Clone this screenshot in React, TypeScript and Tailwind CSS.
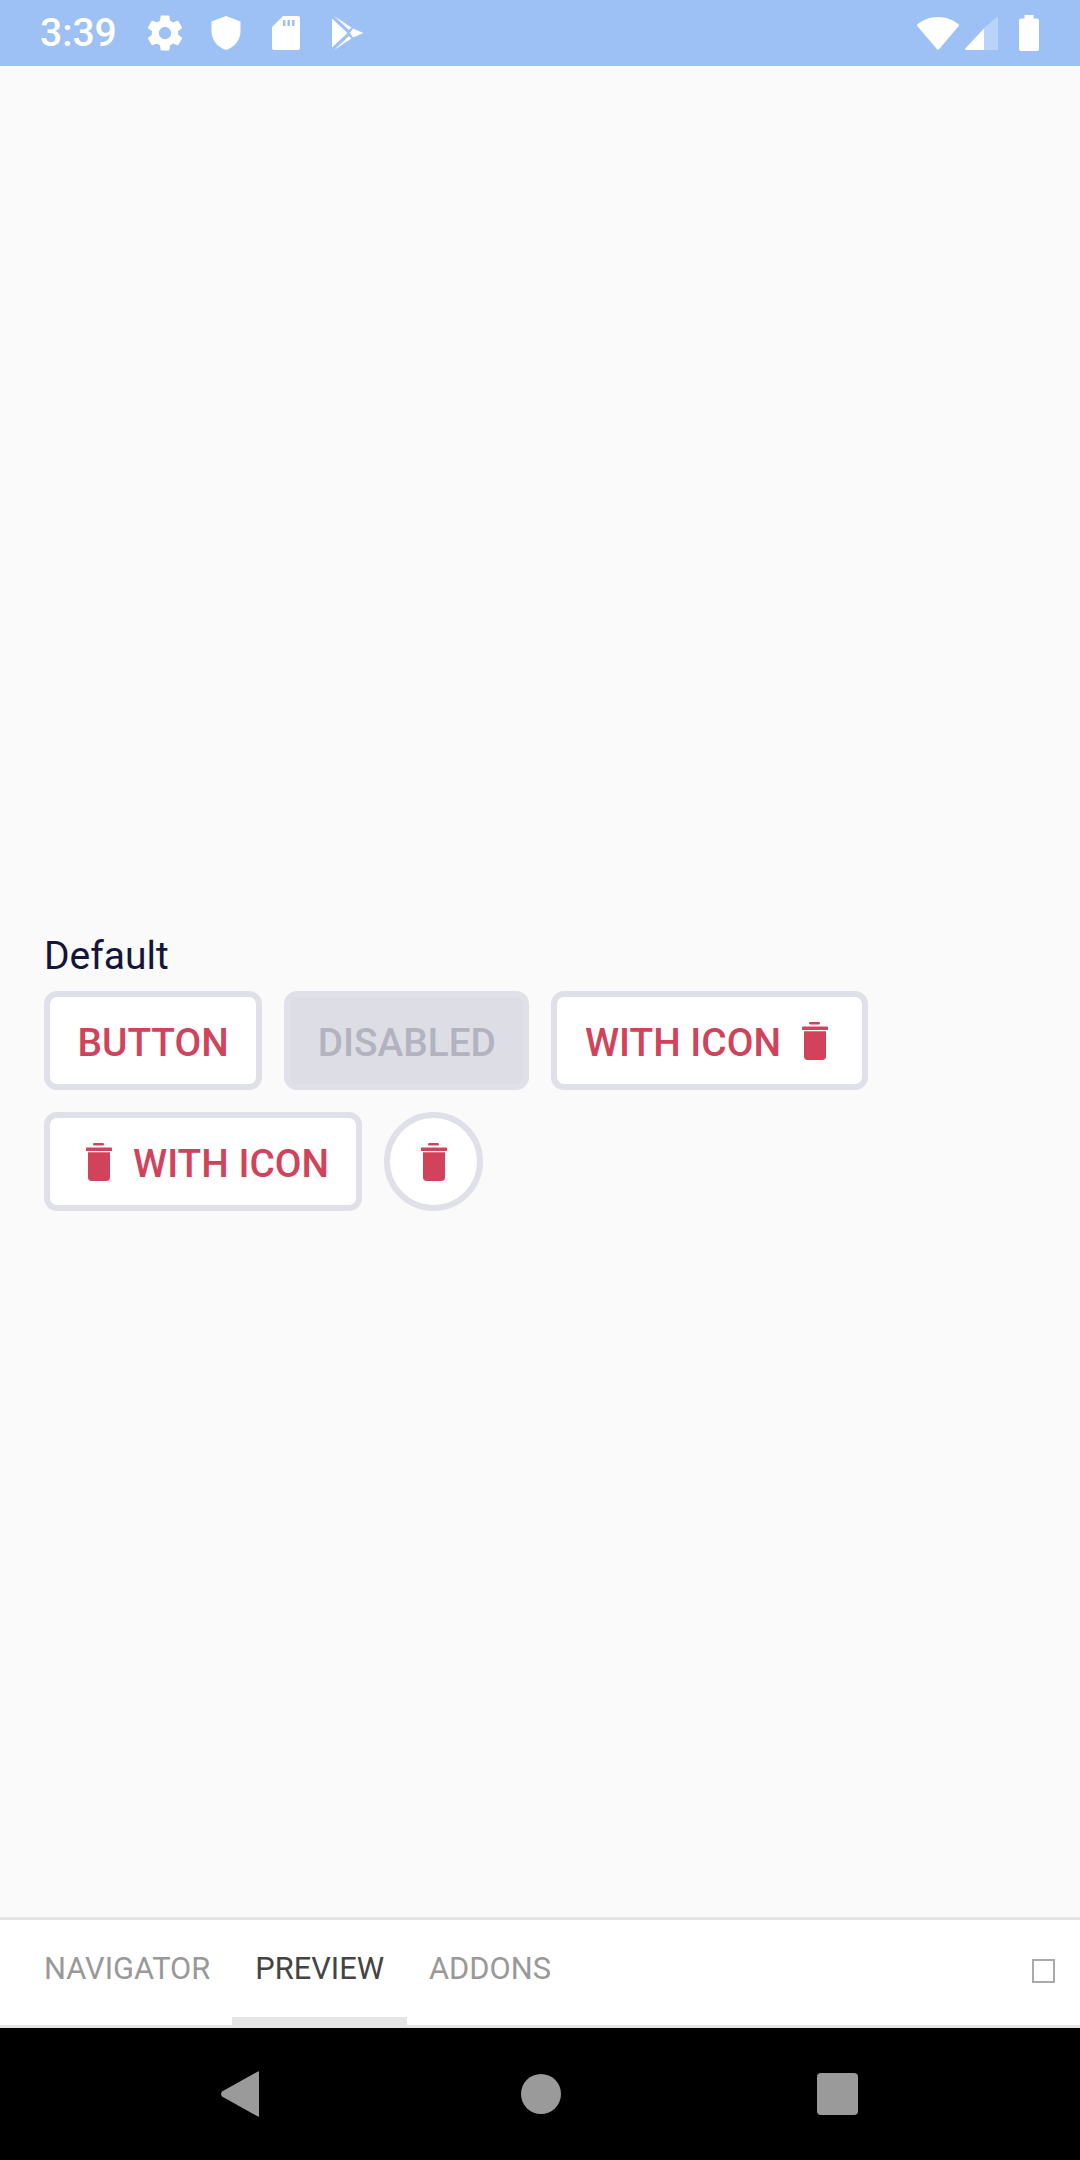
import React from 'react';

function Trash({ className }: { className?: string }) {
  return (
    <svg viewBox="0 0 26 38" className={className} fill="#d1435b">
      <rect x="7" y="0" width="11" height="2.6" rx="1.3" />
      <path d="M1 4.6h24a1 1 0 0 1 1 1V8H0V5.6a1 1 0 0 1 1-1z" />
      <path d="M2 9.2h22v25a3.8 3.8 0 0 1-3.8 3.8H5.8A3.8 3.8 0 0 1 2 34.2z" />
    </svg>
  );
}

function OutlineButton({ children }: { children: React.ReactNode }) {
  return (
    <button className="h-[99px] flex items-center px-[27.5px] pt-[5px] bg-white border-[6px] border-[#dfe0e8] rounded-[13px] text-[38.8px] font-medium text-[#d1435b]">
      {children}
    </button>
  );
}

function StatusBar() {
  return (
    <div className="h-[66px] bg-[#9dc1f5] flex items-center pl-[40px] pr-[41px] text-white shrink-0">
      <span className="text-[39px] font-medium leading-none w-[104px]">3:39</span>
      {/* settings */}
      <svg viewBox="0 0 24 24" className="w-[42px] h-[42px]" fill="#fff">
        <path d="M19.43 12.98c.04-.32.07-.64.07-.98s-.03-.66-.07-.98l2.11-1.65c.19-.15.24-.42.12-.64l-2-3.46c-.12-.22-.39-.3-.61-.22l-2.49 1c-.52-.4-1.08-.73-1.69-.98l-.38-2.65A.488.488 0 0 0 14 2h-4c-.25 0-.46.18-.49.42l-.38 2.65c-.61.25-1.17.59-1.69.98l-2.49-1c-.23-.09-.49 0-.61.22l-2 3.46c-.13.22-.07.49.12.64l2.11 1.65c-.04.32-.07.65-.07.98s.03.66.07.98l-2.11 1.65c-.19.15-.24.42-.12.64l2 3.46c.12.22.39.3.61.22l2.49-1c.52.4 1.08.73 1.69.98l.38 2.65c.03.24.24.42.49.42h4c.25 0 .46-.18.49-.42l.38-2.65c.61-.25 1.17-.59 1.69-.98l2.49 1c.23.09.49 0 .61-.22l2-3.46c.12-.22.07-.49-.12-.64l-2.11-1.65zM12 15.5c-1.93 0-3.5-1.57-3.5-3.5s1.57-3.5 3.5-3.5 3.5 1.57 3.5 3.5-1.57 3.5-3.5 3.5z" />
      </svg>
      {/* shield */}
      <svg viewBox="0 0 30 34" className="w-[30px] h-[34px] ml-[25px]" fill="#fff">
        <path d="M15 0 29.5 5.5V15c0 9-5.8 16.2-14.5 19C6.300 31.200.5 24 .5 15V5.500z" />
      </svg>
      {/* sd card */}
      <svg viewBox="0 0 28 34" className="w-[28px] h-[34px] ml-[31px]" fill="#fff" fillRule="evenodd">
        <path d="M11 0h15a2 2 0 0 1 2 2v30a2 2 0 0 1-2 2H2a2 2 0 0 1-2-2V11zM11 4v6h2.500V4zM15.500 4v6H18V4zM20 4v6h2.500V4z" />
      </svg>
      {/* play store */}
      <svg viewBox="0 0 32 34" className="w-[32px] h-[34px] ml-[32px]" fill="#fff">
        <path d="M0 2.500 15.500 17 0 31.500z" />
        <path d="M2 0 19.500 11.500 17 14z" />
        <path d="M2 34 19.500 22.500 17 20z" />
        <path d="M21 12.500 31.500 17 21 21.500 18 17z" />
      </svg>
      <div className="flex-1" />
      {/* wifi */}
      <svg viewBox="0 0 42 33" className="w-[42px] h-[33px]" fill="#fff">
        <path d="M21 0c8 0 15 2.800 20.500 7.300.6.500.7 1.300.2 1.800L22 32.300c-.5.600-1.500.600-2 0L.3 9.100c-.5-.5-.4-1.300.2-1.800C6 2.800 13 0 21 0z" />
      </svg>
      {/* signal */}
      <svg viewBox="0 0 33 33" className="w-[33px] h-[33px] ml-[6px]">
        <path d="M19 11 32 0c.6-.4 1 0 1 .6V33H19z" fill="#fff" fillOpacity="0.3" />
        <path d="M19 11.500V33H1c-.9 0-1.300-1-.7-1.600z" fill="#fff" />
      </svg>
      {/* battery */}
      <svg viewBox="0 0 20 36" className="w-[20px] h-[36px] ml-[21px]" fill="#fff">
        <path d="M5.500 0h9v3.500H18a2 2 0 0 1 2 2V34a2 2 0 0 1-2 2H2a2 2 0 0 1-2-2V5.500a2 2 0 0 1 2-2h3.500z" />
      </svg>
    </div>
  );
}

function TabBar() {
  return (
    <div className="h-[111px] bg-white border-t-[3px] border-b-[3px] border-[#e5e5e5] flex pl-[22px] pr-[25px] text-[30.8px] text-[#999999] shrink-0">
      <div className="h-full px-[22px] pt-[2px] flex items-center border-b-[8px] border-transparent">NAVIGATOR</div>
      <div className="h-full px-[23px] pt-[2px] flex items-center border-b-[8px] border-[#e5e5e5] text-[#444444]">PREVIEW</div>
      <div className="h-full px-[22px] pt-[2px] flex items-center border-b-[8px] border-transparent">ADDONS</div>
      <div className="flex-1 flex items-center justify-end pb-[4px]">
        <span className="w-[23px] h-[24px] border-2 border-[#aaaaaa]" />
      </div>
    </div>
  );
}

function NavBar() {
  return (
    <div className="h-[132px] bg-black shrink-0 flex items-center pl-[221px]">
      <svg viewBox="0 0 38 46" className="w-[38px] h-[46px]" fill="#9a9a9a">
        <path d="M37 .4c.6-.5 1-.2 1 .6v44c0 .8-.4 1.100-1 .6L1 25.500c-1.300-1.300-1.300-3.700 0-5z" />
      </svg>
      <span className="w-[40px] h-[40px] rounded-full bg-[#9a9a9a] ml-[262px]" />
      <span className="w-[41px] h-[42px] rounded-[4px] bg-[#9a9a9a] ml-[256px]" />
    </div>
  );
}

export default function App() {
  return (
    <div className="h-[2160px] w-[1080px] flex flex-col bg-[#fafafa] font-['Roboto',sans-serif]">
      <StatusBar />
      <main className="flex-1 pl-[44px] pt-[864px]">
        <p className="text-[39px] leading-[45px] pt-[4px] mb-[12px] text-[#14143c]">Default</p>
        <div className="flex flex-col gap-[22px]">
          <div className="flex gap-[22px]">
            <OutlineButton>BUTTON</OutlineButton>
            <button className="h-[99px] flex items-center px-[27.5px] pt-[5px] bg-[#dcdde5] border-[6px] border-[#dfe0e8] rounded-[13px] text-[38.8px] font-medium text-[#b3b3bf]">
              DISABLED
            </button>
            <OutlineButton>
              WITH ICON
              <Trash className="w-[26px] h-[38px] ml-[21px] mr-[7px] -mt-[5px]" />
            </OutlineButton>
          </div>
          <div className="flex gap-[22px]">
            <OutlineButton>
              <Trash className="w-[26px] h-[38px] ml-[8.5px] mr-[21px] -mt-[5px]" />
              WITH ICON
            </OutlineButton>
            <button className="w-[99px] h-[99px] flex items-center justify-center bg-white border-[6px] border-[#dfe0e8] rounded-full">
              <Trash className="w-[26px] h-[38px]" />
            </button>
          </div>
        </div>
      </main>
      <TabBar />
      <NavBar />
    </div>
  );
}
